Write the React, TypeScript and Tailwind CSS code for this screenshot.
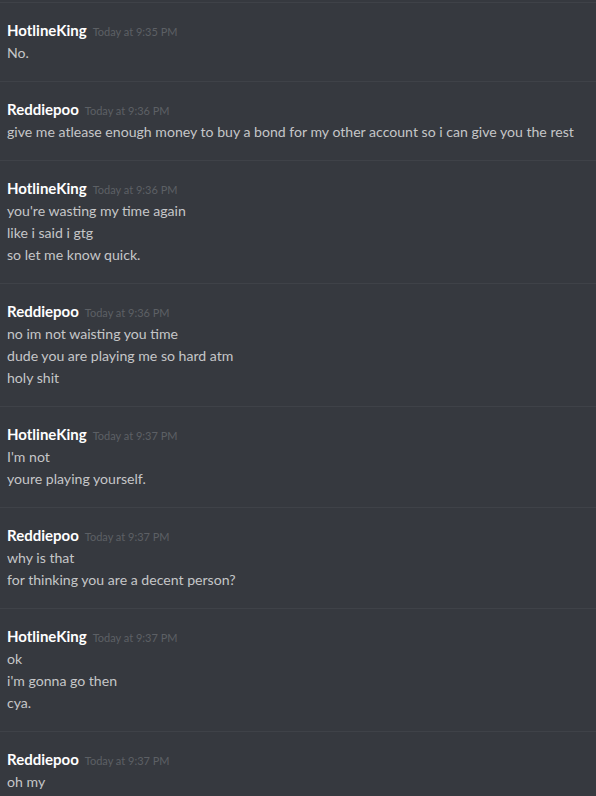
const messages = [
  { author: 'HotlineKing', time: 'Today at 9:35 PM', lines: ['No.'] },
  {
    author: 'Reddiepoo',
    time: 'Today at 9:36 PM',
    lines: ['give me atlease enough money to buy a bond for my other account so i can give you the rest'],
  },
  {
    author: 'HotlineKing',
    time: 'Today at 9:36 PM',
    lines: ["you're wasting my time again", 'like i said i gtg', 'so let me know quick.'],
  },
  {
    author: 'Reddiepoo',
    time: 'Today at 9:36 PM',
    lines: ['no im not waisting you time', 'dude you are playing me so hard atm', 'holy shit'],
  },
  { author: 'HotlineKing', time: 'Today at 9:37 PM', lines: ["I'm not", 'youre playing yourself.'] },
  {
    author: 'Reddiepoo',
    time: 'Today at 9:37 PM',
    lines: ['why is that', 'for thinking you are a decent person?'],
  },
  { author: 'HotlineKing', time: 'Today at 9:37 PM', lines: ['ok', "i'm gonna go then", 'cya.'] },
  { author: 'Reddiepoo', time: 'Today at 9:37 PM', lines: ['oh my'] },
];

export default function App() {
  return (
    <div
      className="h-[796px] w-[596px] overflow-hidden bg-[#36393f] pt-[2px]"
      style={{ fontFamily: 'Lato, "Noto Sans", sans-serif' }}
    >
      {messages.map((m, i) => (
        <div key={i} className="border-t border-[#3f4248] pb-[17px] pl-[7px] pt-[17px]">
          <div className="flex h-[20px] items-baseline gap-[6px] leading-[20px]">
            <span className="text-[15px] font-bold text-white">{m.author}</span>
            <span className="text-[11px] text-[#5d6065]">{m.time}</span>
          </div>
          <div className="pt-[2px]">
            {m.lines.map((l, j) => (
              <div key={j} className="whitespace-nowrap text-[14.1px] leading-[22px] text-[#c5c6c8]">
                {l}
              </div>
            ))}
          </div>
        </div>
      ))}
    </div>
  );
}
